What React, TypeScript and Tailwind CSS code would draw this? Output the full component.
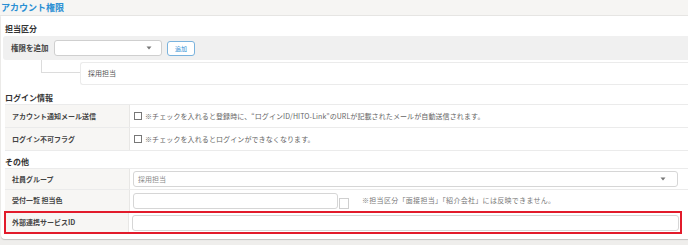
const font = { fontFamily: '"Noto Sans CJK JP", "Noto Sans", sans-serif' };

const Caret = () => (
  <svg width="6" height="4" viewBox="0 0 6 4" className="shrink-0">
    <path d="M0.5 0.5h5L3 3.5z" fill="#777" />
  </svg>
);

const Row = ({ label, children, h }: { label: string; children: React.ReactNode; h: string }) => (
  <div className={`flex ${h} border-b border-[#ebebeb]`}>
    <div className="w-[125px] shrink-0 bg-[#f7f6f4] border-r border-[#e8e7e5] pl-[7px] flex items-center text-[7px] font-bold text-[#444]">
      {label}
    </div>
    <div className="flex-1 flex items-center pl-[3px] text-[7px] text-[#666]">{children}</div>
  </div>
);

const Check = () => (
  <span className="inline-block w-[8px] h-[8px] border border-[#777] bg-white ml-[1px] mr-[3px] shrink-0" />
);

export default function App() {
  return (
    <div className="w-[688px] h-[245px] bg-[#efeeec] overflow-hidden" style={font}>
      <div className="h-[16px] bg-[#f6f5f3] border-b border-[#e6e5e3] flex items-center pl-[1px] text-[9px] font-bold text-[#2a8fd3]">
        アカウント権限
      </div>
      <div className="ml-[1px] bg-white rounded-bl-[4px] shadow-[0_1px_1px_rgba(0,0,0,0.18)] pb-[5px]">
        <div className="pt-[6px] h-[20px] pl-[4px] flex items-center text-[8px] font-bold text-[#333]">担当区分</div>
        <div className="ml-[2px] h-[24px] bg-[#f0f0f0] flex items-center pl-[8px] rounded-l-[3px]">
          <span className="text-[7.5px] font-bold text-[#444] w-[43px]">権限を追加</span>
          <div className="w-[108px] h-[16px] bg-white border border-[#cfcfcf] rounded-[3px] flex items-center justify-end pr-[9px]">
            <Caret />
          </div>
          <button className="ml-[5px] w-[28px] h-[15px] bg-white border border-[#7ab3dd] rounded-[3px] text-[6px] text-[#2a8fd3] flex items-center justify-center">
            追加
          </button>
        </div>
        <div className="flex h-[26px]">
          <div className="ml-[40px] w-[39px] h-[13px] border-l border-b border-[#dcdcdc]" />
          <div className="flex-1 mt-[2px] h-[23px] border-t border-b border-l border-[#ebebeb] rounded-l-[3px] flex items-center pl-[7px] text-[7px] text-[#555]">
            採用担当
          </div>
        </div>
        <div className="pt-[6px] h-[18px] pl-[4px] flex items-center text-[8px] font-bold text-[#333]">ログイン情報</div>
        <div className="ml-[4px] border-t border-[#ebebeb]">
          <Row label="アカウント通知メール送信" h="h-[23px]">
            <Check />
            <span className="tracking-[0.1px]">
              ※チェックを入れると登録時に、“ログインID/HITO-Link”のURLが記載されたメールが自動送信されます。
            </span>
          </Row>
          <Row label="ログイン不可フラグ" h="h-[23px]">
            <Check />
            <span className="tracking-[0.1px]">※チェックを入れるとログインができなくなります。</span>
          </Row>
        </div>
        <div className="pt-[4px] h-[17px] pl-[4px] flex items-center text-[8px] font-bold text-[#333]">その他</div>
        <div className="ml-[4px] border-t border-[#ebebeb]">
          <Row label="社員グループ" h="h-[21px]">
            <div className="w-[545px] h-[16px] border border-[#d6d6d6] rounded-[3px] flex items-center justify-between pl-[4px] pr-[11px] text-[#888]">
              <span>採用担当</span>
              <Caret />
            </div>
          </Row>
          <div className="flex h-[21px]">
            <div className="w-[125px] shrink-0 bg-[#f7f6f4] border-r border-[#e8e7e5] pl-[7px] flex items-center text-[7px] font-bold text-[#444]">
              受付一覧 担当色
            </div>
            <div className="flex-1 flex items-center pl-[3px] text-[7px] text-[#666]">
              <div className="w-[205px] h-[16px] border border-[#d6d6d6] rounded-[3px]" />
              <div className="w-[10px] h-[11px] border border-[#cfcfcf] mt-[6px] ml-[1px]" />
              <span className="ml-[13px] tracking-[0.3px] text-[#777]">
                ※担当区分「面接担当」「紹介会社」には反映できません。
              </span>
            </div>
          </div>
        </div>
        <div className="ml-[3px] mr-[6px] border-2 border-[#e21b2b]">
          <div className="flex h-[19px]">
            <div className="w-[123px] shrink-0 bg-[#f7f6f4] border-r border-[#e8e7e5] pl-[6px] flex items-center text-[7px] font-bold text-[#444]">
              外部連携サービスID
            </div>
            <div className="flex-1 flex items-center pl-[3px] pr-[1px]">
              <div className="w-full h-[16px] border border-[#d6d6d6] rounded-[3px]" />
            </div>
          </div>
        </div>
      </div>
    </div>
  );
}
